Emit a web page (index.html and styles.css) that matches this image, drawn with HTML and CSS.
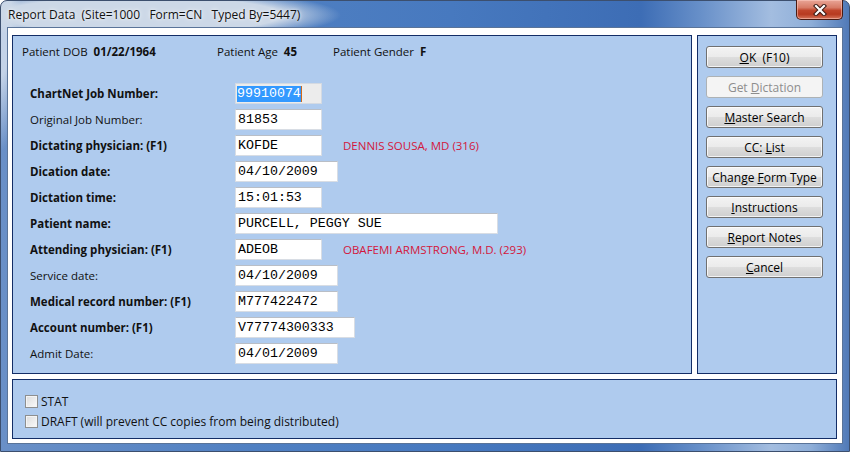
FILE: index.html
```
<!DOCTYPE html>
<html>
<head>
<meta charset="utf-8">
<link rel="stylesheet" href="styles.css">
</head>
<body>
<div class="window">
  <div class="titlebar">
    <span class="title">Report Data&nbsp; (Site=1000 &nbsp; Form=CN &nbsp; Typed By=5447)</span>
    <div class="close">
      <svg width="18" height="12" viewBox="0 0 18 12">
        <path d="M5 2 L13 10 M13 2 L5 10" stroke="#3b1a14" stroke-width="4.2" stroke-linecap="square" fill="none"/>
        <path d="M5 2 L13 10 M13 2 L5 10" stroke="#ffffff" stroke-width="2.2" stroke-linecap="square" fill="none"/>
      </svg>
    </div>
  </div>
  <div class="client">
    <div class="toprow">
      <div class="panel main">
        <div class="header">
          <span class="hitem h1">Patient DOB&nbsp; <b>01/22/1964</b></span>
          <span class="hitem h2">Patient Age&nbsp; <b>45</b></span>
          <span class="hitem">Patient Gender&nbsp; <b>F</b></span>
        </div>
        <div class="rows">
          <div class="row"><span class="lbl b">ChartNet Job Number:</span><span class="field w87 active"><span class="sel">99910074</span><span class="caret"></span></span></div>
          <div class="row"><span class="lbl">Original Job Number:</span><span class="field w87">81853</span></div>
          <div class="row"><span class="lbl b">Dictating physician: (F1)</span><span class="field w87">KOFDE</span><span class="note">DENNIS SOUSA, MD (316)</span></div>
          <div class="row"><span class="lbl b">Dication date:</span><span class="field w103">04/10/2009</span></div>
          <div class="row"><span class="lbl b">Dictation time:</span><span class="field w87">15:01:53</span></div>
          <div class="row"><span class="lbl b">Patient name:</span><span class="field w263">PURCELL, PEGGY SUE</span></div>
          <div class="row"><span class="lbl b">Attending physician: (F1)</span><span class="field w87">ADEOB</span><span class="note">OBAFEMI ARMSTRONG, M.D. (293)</span></div>
          <div class="row"><span class="lbl">Service date:</span><span class="field w103">04/10/2009</span></div>
          <div class="row"><span class="lbl b">Medical record number: (F1)</span><span class="field w103">M777422472</span></div>
          <div class="row"><span class="lbl b">Account number: (F1)</span><span class="field w120">V77774300333</span></div>
          <div class="row"><span class="lbl">Admit Date:</span><span class="field w103">04/01/2009</span></div>
        </div>
      </div>
      <div class="panel side">
        <div class="btn"><u>O</u>K&nbsp; (F10)</div>
        <div class="btn disabled">Get <u>D</u>ictation</div>
        <div class="btn"><u>M</u>aster Search</div>
        <div class="btn">CC: <u>L</u>ist</div>
        <div class="btn">Change <u>F</u>orm Type</div>
        <div class="btn"><u>I</u>nstructions</div>
        <div class="btn"><u>R</u>eport Notes</div>
        <div class="btn"><u>C</u>ancel</div>
      </div>
    </div>
    <div class="panel bottom">
      <div class="check"><span class="box"></span><span>STAT</span></div>
      <div class="check"><span class="box"></span><span>DRAFT (will prevent CC copies from being distributed)</span></div>
    </div>
  </div>
</div>
</body>
</html>
```
FILE: styles.css
```
* { box-sizing: border-box; }
html, body { margin: 0; padding: 0; }
body {
  width: 850px;
  height: 452px;
  overflow: hidden;
  background: #ffffff;
  font-family: "Open Sans", "Noto Sans", sans-serif;
  font-size: 11.5px;
  color: #000;
}
.window {
  width: 850px;
  height: 452px;
  border: 1px solid #3c4f6e;
  border-radius: 7px 7px 0 0;
  background:
    radial-gradient(ellipse 200px 26px at 140px 14px, rgba(204,216,231,1) 70%, rgba(204,216,231,0) 100%),
    radial-gradient(ellipse 20px 150px at 0px 0px, rgba(196,211,232,1) 50%, rgba(196,211,232,0) 100%),
    linear-gradient(90deg, #6a90c7 0px, #5080c2 250px, #4779bf 450px, #3d6db5 640px, #6890c9 700px, #a3bde0 770px, #8eaed8 810px, #4d77b6 850px);
  display: flex;
  flex-direction: column;
}
.titlebar {
  height: 26px;
  display: flex;
  justify-content: space-between;
  align-items: flex-start;
  padding-left: 7px;
}
.title {
  margin-top: 6px;
  font-size: 12px;
  line-height: 16px;
  color: #111;
  text-shadow: 0 0 6px rgba(255,255,255,0.8), 0 0 3px rgba(255,255,255,0.8);
  white-space: pre;
}
.close {
  width: 47px;
  height: 20px;
  margin-top: -1px;
  margin-right: 6px;
  border: 1px solid #4a1b12;
  border-top: none;
  border-radius: 0 0 5px 5px;
  background: linear-gradient(#e9a597 0%, #d77b66 40%, #c0452b 55%, #b73a20 75%, #d6745a 100%);
  box-shadow: inset 0 0 0 1px rgba(255,210,200,0.5);
  display: flex;
  align-items: center;
  justify-content: center;
}
.client {
  margin: 0 6px 0 6px;
  height: 417px;
  border: 1px solid #5a7499;
  background: #ffffff;
  padding: 7px 5px 4px 4px;
  display: flex;
  flex-direction: column;
  gap: 5px;
}
.toprow {
  height: 339px;
  display: flex;
  gap: 5px;
}
.panel {
  background: #afcbee;
  border: 1px solid #132d66;
}
.main {
  width: 680px;
  padding: 8px 0 0 9px;
}
.header {
  display: flex;
  height: 16px;
  line-height: 16px;
}
.hitem { white-space: pre; color: #111; }
.hitem b { font-weight: 700; }
.h1 { width: 195px; }
.h2 { width: 116px; }
.rows {
  margin-top: 23px;
  padding-left: 8px;
  display: flex;
  flex-direction: column;
  gap: 5px;
}
.row {
  display: flex;
  align-items: center;
  height: 21px;
}
.lbl {
  width: 205px;
  white-space: nowrap;
  color: #111;
}
.lbl.b { font-weight: 700; }
.field {
  height: 21px;
  background: #ffffff;
  border: 1px solid #d8dde4;
  border-top-color: #b9bec6;
  font-family: "Liberation Mono", "DejaVu Sans Mono", monospace;
  font-size: 13.3px;
  line-height: 19px;
  padding-left: 2px;
  white-space: pre;
  display: flex;
  align-items: center;
}
.field.active { background: #ececec; border-color: #d4dae2; padding-left: 1px; }
.sel { background: #3399ff; color: #ffffff; line-height: 16px; }
.caret { width: 1px; height: 16px; background: #d06a1a; }
.w87 { width: 87px; }
.w103 { width: 103px; }
.w120 { width: 120px; }
.w263 { width: 263px; }
.note {
  margin-left: 21px;
  color: #d3173c;
  white-space: nowrap;
}
.side {
  width: 140px;
  padding: 10px 0 0 8px;
  display: flex;
  flex-direction: column;
  gap: 8px;
}
.btn {
  width: 117px;
  height: 22px;
  border: 1px solid #707070;
  border-radius: 3px;
  background: linear-gradient(#f3f3f3 0%, #ebebeb 48%, #dddddd 52%, #cfcfcf 100%);
  box-shadow: inset 0 0 0 1px rgba(255,255,255,0.75);
  display: flex;
  align-items: center;
  justify-content: center;
  font-size: 12px;
  color: #000;
  white-space: pre;
}
.btn.disabled {
  border-color: #adb2b5;
  background: #f4f4f4;
  color: #8d8d8d;
  box-shadow: none;
}
.bottom {
  height: 60px;
  padding: 15px 12px 0 12px;
  display: flex;
  flex-direction: column;
  gap: 7px;
}
.check {
  display: flex;
  align-items: center;
  height: 13px;
  gap: 3px;
  white-space: nowrap;
  color: #111;
  font-size: 12px;
}
.box {
  width: 13px;
  height: 13px;
  border: 1px solid #8e8f8f;
  background: linear-gradient(135deg, #dcdcdc 0%, #eeeeee 60%, #fbfbfb 100%);
  box-shadow: inset 0 0 0 1px #f4f4f4;
}
```
